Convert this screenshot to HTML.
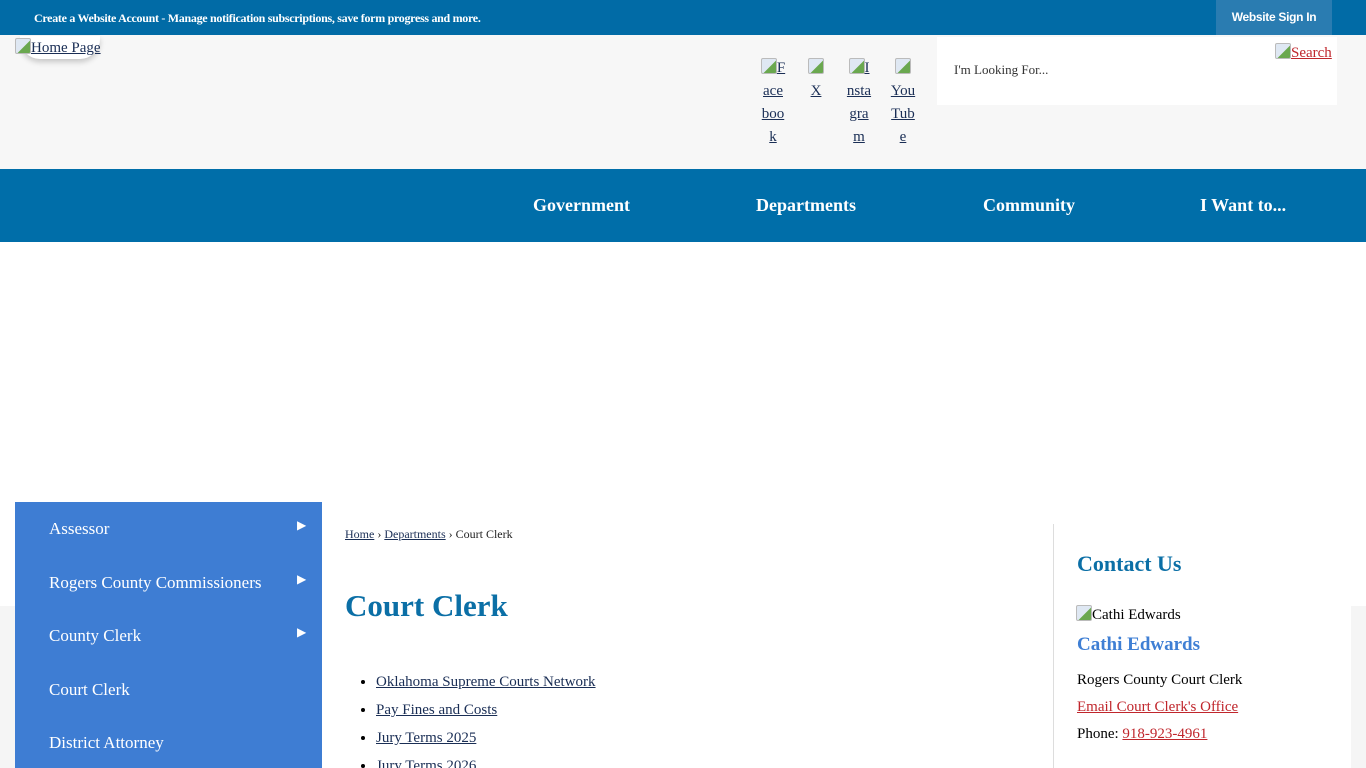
<!DOCTYPE html>
<html><head><style>
*{margin:0;padding:0;box-sizing:border-box}
html,body{width:1366px;height:768px;overflow:hidden}
body{background:#fff;font-family:"Liberation Serif",serif;position:relative}
.a{position:absolute}
a{color:#1a2e55}
.i{display:inline-block;width:16px;height:16px;vertical-align:-2px;border:1px solid #bbb;border-radius:2px;background:linear-gradient(135deg,#dfe8f3 55%,#6aa84f 56%)}
</style></head><body>
<div class="a" style="left:0;top:0;width:1366px;height:35px;background:#016ba6"></div>
<div class="a" style="left:34px;top:11px;font-size:12px;color:#fff;font-weight:bold;letter-spacing:-0.3px">Create a Website Account - Manage notification subscriptions, save form progress and more.</div>
<div class="a" style="left:1216px;top:0;width:116px;height:35px;background:#2a7cb1;color:#fff;font:bold 12px 'Liberation Sans',sans-serif;text-align:center;line-height:35px;letter-spacing:-0.3px">Website Sign In</div>
<div class="a" style="left:0;top:35px;width:1366px;height:134px;background:#f7f7f7"></div>
<div class="a" style="left:20px;top:36px;width:80px;height:23px;background:#fff;border-radius:0 0 20px 20px;box-shadow:0 3px 6px rgba(0,0,0,.2)"></div>
<div class="a" style="left:15px;top:38px;font-size:15px"><span class="i"></span><a href="#">Home Page</a></div>
<div class="a" style="left:759px;top:57px;width:28px;font-size:15px;line-height:23px;text-align:center"><span class="i"></span><a href="#">F ace boo k</a></div>
<div class="a" style="left:802px;top:57px;width:28px;font-size:15px;line-height:23px;text-align:center"><span class="i"></span><br><a href="#">X</a></div>
<div class="a" style="left:846px;top:57px;width:26px;font-size:15px;line-height:23px;text-align:center"><span class="i"></span><a href="#">I nsta gra m</a></div>
<div class="a" style="left:889px;top:57px;width:28px;font-size:15px;line-height:23px;text-align:center"><span class="i"></span><br><a href="#">You Tub e</a></div>
<div class="a" style="left:937px;top:37px;width:400px;height:68px;background:#fff"></div>
<div class="a" style="left:954px;top:62px;font-size:13px;color:#333">I'm Looking For...</div>
<div class="a" style="left:1275px;top:43px;font-size:15px"><span class="i"></span><a href="#" style="color:#c0262c">Search</a></div>
<div class="a" style="left:0;top:169px;width:1366px;height:73px;background:#006ea9"></div>
<div class="a" style="top:195px;left:533px;color:#fff;font-weight:bold;font-size:18px">Government</div>
<div class="a" style="top:195px;left:756px;color:#fff;font-weight:bold;font-size:18px">Departments</div>
<div class="a" style="top:195px;left:983px;color:#fff;font-weight:bold;font-size:18px">Community</div>
<div class="a" style="top:195px;left:1200px;color:#fff;font-weight:bold;font-size:18px">I Want to...</div>
<div class="a" style="left:0;top:606px;width:1366px;height:162px;background:#f5f5f5"></div>
<div class="a" style="left:15px;top:502px;width:1336px;height:266px;background:#fff"></div>
<div class="a" style="left:15px;top:502px;width:307px;height:266px;background:#3e7dd3"></div>
<div class="a" style="left:49px;top:502px;color:#fff;font-size:17px;line-height:53.5px">Assessor<br>Rogers County Commissioners<br>County Clerk<br>Court Clerk<br>District Attorney</div>
<div class="a" style="left:297px;top:499px;color:#fff;font-size:12px;line-height:53.5px">&#9654;<br>&#9654;<br>&#9654;</div>
<div class="a" style="left:345px;top:527px;font-size:12px;color:#222"><a href="#">Home</a> › <a href="#">Departments</a> › Court Clerk</div>
<div class="a" style="left:345px;top:588px;font-size:31px;font-weight:bold;color:#0b6fa6">Court Clerk</div>
<ul class="a" style="left:376px;top:668px;font-size:15px;line-height:28px">
<li><a href="#">Oklahoma Supreme Courts Network</a></li>
<li><a href="#">Pay Fines and Costs</a></li>
<li><a href="#">Jury Terms 2025</a></li>
<li><a href="#">Jury Terms 2026</a></li>
</ul>
<div class="a" style="left:1053px;top:524px;width:1px;height:244px;background:#ddd"></div>
<div class="a" style="left:1077px;top:551px;font-size:22px;font-weight:bold;color:#0b6fa6">Contact Us</div>
<div class="a" style="left:1076px;top:605px;font-size:15px"><span class="i"></span>Cathi Edwards</div>
<div class="a" style="left:1077px;top:634px;font-size:19px;font-weight:bold;color:#3f7fd4">Cathi Edwards</div>
<div class="a" style="left:1077px;top:667px;font-size:15px;line-height:27px">Rogers County Court Clerk<br><a href="#" style="color:#c0262c">Email Court Clerk's Office</a><br>Phone: <a href="#" style="color:#c0262c">918-923-4961</a></div>
</body></html>
